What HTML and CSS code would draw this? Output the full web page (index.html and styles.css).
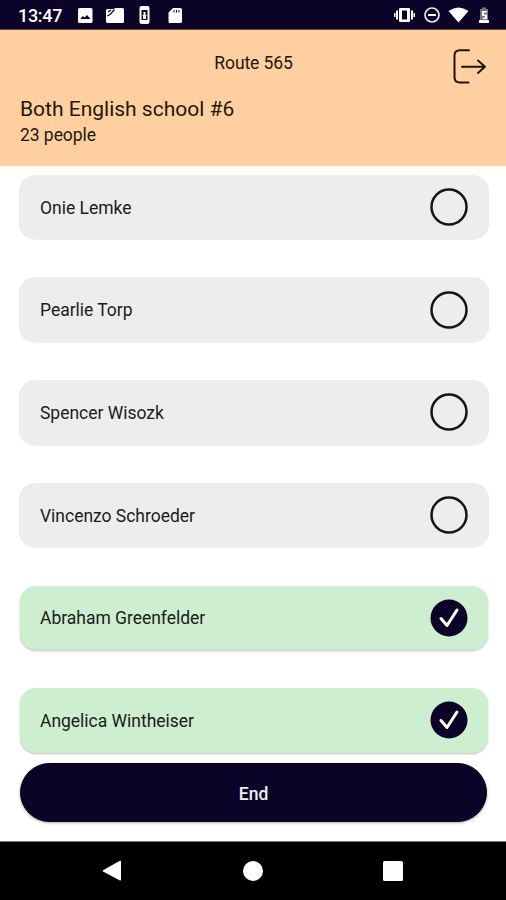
FILE: index.html
```html
<!DOCTYPE html>
<html lang="en">
<head>
<meta charset="utf-8">
<title>Route 565</title>
<link rel="stylesheet" href="styles.css">
</head>
<body>
<div class="screen">
  <div class="status">
    <span class="clock">13:47</span>
    <svg class="status-left" width="106" height="20" viewBox="0 0 106 20" fill="#fff">
      <path fill-rule="evenodd" d="M2.500 3H14q1.500 0 1.500 1.500v12q0 1.500-1.500 1.500H2.500q-1.500 0-1.500-1.500v-12Q1 3 2.500 3zM3.500 14h10l-3.500-4-2.500 2.500-1.800-1.500z"/>
      <path d="M30.500 4h6l2-1h7q1.500 0 1.500 1.500v12q0 1.500-1.500 1.500h-15q-1.500 0-1.500-1.500v-11Q29 4 30.500 4z"/>
      <path d="M30.500 11l3-2 4-4.500M31 7l3-2" fill="none" stroke="#0b0428" stroke-width="1.200"/>
      <path fill-rule="evenodd" d="M64.500 1h6q2 0 2 2v14q0 2-2 2h-6q-2 0-2-2V3q0-2 2-2zm0 4v10h6V5z"/>
      <path d="M66.500 7h2v3h1.500l-1 1v3h-3v-3l-1-1h1.500z"/>
      <path fill-rule="evenodd" d="M96 3h7.500q1.500 0 1.500 1.500v12q0 1.500-1.500 1.500H93q-1.500 0-1.500-1.500V7.500zM96.500 5v2.500h1V5zm2.500 0v2.500h1V5zm2.500 0v2.500h1V5z"/>
    </svg>
    <svg class="status-right" width="96" height="20" viewBox="0 0 96 20" fill="#fff">
      <path fill-rule="evenodd" d="M6 3h9q1 0 1 1v12q0 1-1 1H6q-1 0-1-1V4q0-1 1-1zm2 2.500v9h5v-9zM2 5.500h2v9H2zM0 8h1.500v4H0zM17 5.500h2v9h-2zM19.500 8H21v4h-1.500z"/>
      <circle cx="38" cy="10" r="7" fill="none" stroke="#e8e8ee" stroke-width="1.700"/>
      <path d="M34 9h8v2h-8zM54.500 6q10-7 20 0L64.500 17.500z"/>
      <path fill="#77728a" d="M86 4h2V2.500h4V4h2v12h-8z"/>
      <path d="M85 15h10v3H85z"/>
      <path d="M88 6h5v1.500h-3v2h3V14h-4v-1.500h2V11h-3z"/>
    </svg>
  </div>
  <header class="header">
    <div class="topline">
      <div class="route">Route 565</div>
      <svg class="exit" width="36" height="38" viewBox="0 0 36 38" fill="none" stroke="#1d160f" stroke-width="2" stroke-linecap="round" stroke-linejoin="round">
        <path d="M18 3.200H9Q3.500 3.200 3.500 8.500v21.500q0 5.500 5.500 5.500h8.500M11 19.700h23M27 13.500l7 6.200-7 6.300"/>
      </svg>
    </div>
    <h1 class="school">Both English school #6</h1>
    <div class="count">23 people</div>
  </header>
  <main class="list">
    <div class="card"><span>Onie Lemke</span><svg class="ring" width="38" height="38" viewBox="0 0 38 38"><circle cx="19" cy="19" r="17.500"/></svg></div>
    <div class="card"><span>Pearlie Torp</span><svg class="ring" width="38" height="38" viewBox="0 0 38 38"><circle cx="19" cy="19" r="17.500"/></svg></div>
    <div class="card"><span>Spencer Wisozk</span><svg class="ring" width="38" height="38" viewBox="0 0 38 38"><circle cx="19" cy="19" r="17.500"/></svg></div>
    <div class="card"><span>Vincenzo Schroeder</span><svg class="ring" width="38" height="38" viewBox="0 0 38 38"><circle cx="19" cy="19" r="17.500"/></svg></div>
    <div class="card done"><span>Abraham Greenfelder</span>
      <svg class="tick" width="38" height="38" viewBox="0 0 38 38"><circle cx="19" cy="19" r="18.500" fill="#0b0428"/><path d="M11 19.500l6 7L27 11" fill="none" stroke="#fff" stroke-width="3" stroke-linecap="round" stroke-linejoin="round"/></svg></div>
    <div class="card done"><span>Angelica Wintheiser</span>
      <svg class="tick" width="38" height="38" viewBox="0 0 38 38"><circle cx="19" cy="19" r="18.500" fill="#0b0428"/><path d="M11 19.500l6 7L27 11" fill="none" stroke="#fff" stroke-width="3" stroke-linecap="round" stroke-linejoin="round"/></svg></div>
  </main>
  <button class="end">End</button>
  <nav class="nav">
    <svg width="20" height="22" viewBox="0 0 20 22" fill="#fff"><path d="M1 10.300L17.500 1q1.500-.6 1.500 1v17.500q0 1.500-1.500.8L1 11.500q-.8-.6 0-1.200z"/></svg>
    <i class="home"></i>
    <i class="recent"></i>
  </nav>
</div>
</body>
</html>
```
FILE: styles.css
```css
* { box-sizing: border-box; }
body {
  margin: 0;
  background: #fff;
  color: #1c1b1b;
  font-family: Roboto, sans-serif;
}
.screen {
  display: flex;
  flex-direction: column;
  width: 506px;
  height: 900px;
  overflow: hidden;
}
.status {
  display: flex;
  align-items: center;
  flex: none;
  height: 30px;
  padding: 0 16px 0 18px;
  background: #0b0428;
  border-bottom: 1px solid #68503f;
}
.clock {
  width: 59px;
  padding-top: 3px;
  color: #fff;
  font-size: 18px;
  font-weight: 500;
  line-height: 20px;
  letter-spacing: -.3px;
}
.status-right { margin-left: auto; }
.header {
  flex: none;
  height: 136px;
  padding: 17px 19px 0 20px;
  background: #ffcf9f;
  color: #21190f;
}
.topline {
  display: grid;
  grid-template-columns: 36px 1fr 36px;
  height: 48px;
}
.route {
  grid-column: 2;
  padding-top: 5px;
  font-size: 17.5px;
  line-height: 22px;
  letter-spacing: -.1px;
  text-align: center;
}
.exit { grid-column: 3; }
.school {
  margin: 0;
  font-size: 21px;
  font-weight: 400;
  line-height: 28px;
}
.count {
  font-size: 17.5px;
  line-height: 25px;
  letter-spacing: -.05px;
}
.list {
  display: flex;
  flex-direction: column;
  flex: none;
  gap: 38.200px;
  padding: 8.800px 17.500px 0 18.500px;
}
.card {
  display: flex;
  align-items: center;
  justify-content: space-between;
  height: 64.500px;
  padding: 0 20.500px 0 21.500px;
  border-radius: 16px;
  background: #ededed;
  box-shadow: 0 1px 1px rgba(0, 0, 0, .06);
  font-size: 17.500px;
  letter-spacing: -.02px;
}
.card span { padding-top: 1px; }
.card.done {
  margin: 0 1px;
  padding: 0 19.500px 0 20.500px;
  background: #cdeecf;
  box-shadow: 0 1px 2px rgba(0, 0, 0, .25);
}
.ring {
  fill: none;
  stroke: #151515;
  stroke-width: 2.500px;
}
.end {
  flex: none;
  height: 59px;
  margin: 10.500px 19px 0 20px;
  padding: 2px 0 0;
  border: 1px solid #000;
  border-radius: 30px;
  background: #0b0428;
  box-shadow: 0 1px 3px rgba(0, 0, 0, .3);
  color: #eee;
  font: 500 17.500px Roboto, sans-serif;
}
.nav {
  display: flex;
  align-items: center;
  justify-content: space-between;
  height: 59px;
  margin-top: auto;
  padding: 0 103px 0 102px;
  border-top: 1px solid #777;
  background: #000;
}
.home, .recent {
  width: 20px;
  height: 20px;
  background: #fff;
}
.home { border-radius: 50%; }
.recent { border-radius: 1.500px; }
```
